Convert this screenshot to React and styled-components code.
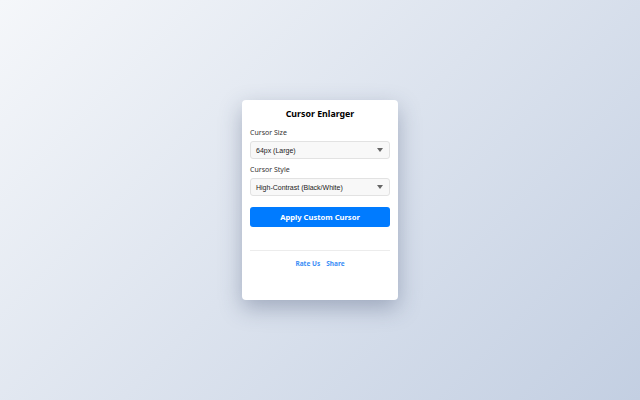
import React from "react"
import styled, { createGlobalStyle } from "styled-components"

const GlobalStyle = createGlobalStyle`
  html, body {
    margin: 0;
    padding: 0;
  }
  body {
    font-family: "Noto Sans", "Open Sans", sans-serif;
    background: linear-gradient(135deg, #f5f7fa 0%, #c3cfe2 100%);
    min-height: 100vh;
  }
`

const Page = styled.div`
  display: flex;
  align-items: center;
  justify-content: center;
  min-height: 100vh;
`

const Card = styled.div`
  box-sizing: border-box;
  width: 156px;
  height: 200px;
  padding: 8px;
  background: #fff;
  border-radius: 4px;
  box-shadow: 0 8px 22px rgba(50, 65, 100, 0.34);
  display: flex;
  flex-direction: column;
`

const Title = styled.h1`
  margin: 0 0 8px;
  font-size: 8.8px;
  line-height: 12px;
  font-weight: 700;
  text-align: center;
  color: #000;
`

const Label = styled.div`
  font-size: 7px;
  line-height: 10px;
  color: #333;
  margin-bottom: 3px;
`

const SelectBox = styled.div`
  box-sizing: border-box;
  height: 18px;
  display: flex;
  align-items: center;
  justify-content: space-between;
  padding: 0 5px;
  margin-bottom: ${(p) => p.$gap}px;
  background: #f8f8f8;
  border: 1px solid #e2e2e2;
  border-radius: 3px;
  font-family: "Liberation Sans", Arial, sans-serif;
  font-size: 7px;
  color: #1a1a1a;
`

const Caret = styled.span`
  width: 0;
  height: 0;
  border-left: 3.5px solid transparent;
  border-right: 3.5px solid transparent;
  border-top: 4px solid #666;
  margin-right: 1px;
`

const ApplyButton = styled.button`
  box-sizing: border-box;
  height: 20px;
  border: none;
  border-radius: 3px;
  background: #007bff;
  color: #fff;
  font-family: inherit;
  font-size: 7.6px;
  font-weight: 700;
  cursor: pointer;
`

const Divider = styled.hr`
  border: none;
  border-top: 1px solid #ececec;
  margin: 23px 0 0;
`

const Links = styled.div`
  display: flex;
  justify-content: center;
  gap: 6px;
  margin-top: 8px;
`

const Link = styled.a`
  font-size: 6.5px;
  font-weight: 700;
  color: #3a8ef6;
  text-decoration: none;
`

export default function App() {
  return (
    <>
      <GlobalStyle />
      <Page>
        <Card>
          <Title>Cursor Enlarger</Title>
          <Label>Cursor Size</Label>
          <SelectBox $gap={6}>
            <span>64px (Large)</span>
            <Caret />
          </SelectBox>
          <Label>Cursor Style</Label>
          <SelectBox $gap={11}>
            <span>High-Contrast (Black/White)</span>
            <Caret />
          </SelectBox>
          <ApplyButton>Apply Custom Cursor</ApplyButton>
          <Divider />
          <Links>
            <Link href="#">Rate Us</Link>
            <Link href="#">Share</Link>
          </Links>
        </Card>
      </Page>
    </>
  )
}
